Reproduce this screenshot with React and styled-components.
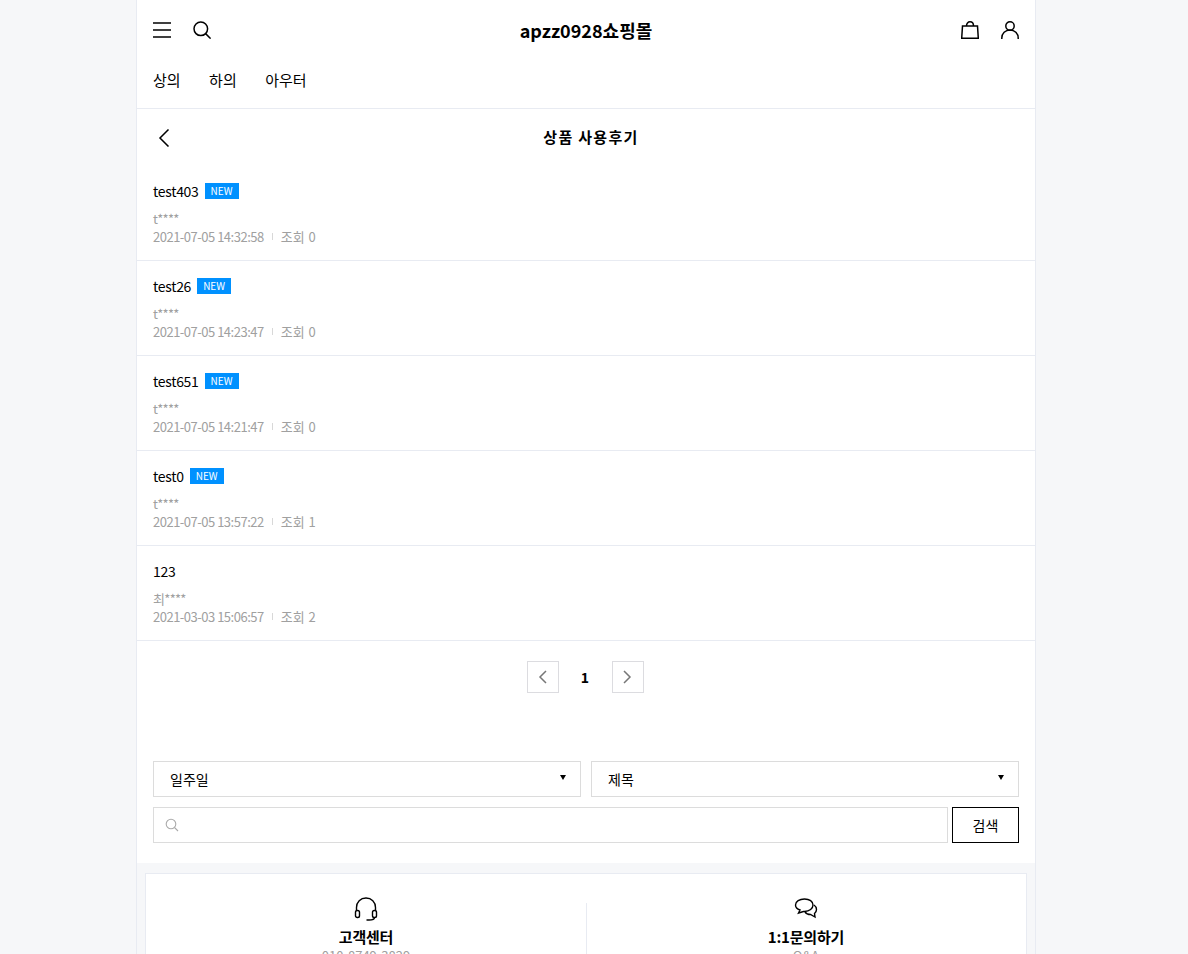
import React from "react";
import styled, { createGlobalStyle } from "styled-components";

const reviews = [
  { title: "test403", isNew: true, writer: "t****", date: "2021-07-05 14:32:58", views: 0 },
  { title: "test26", isNew: true, writer: "t****", date: "2021-07-05 14:23:47", views: 0 },
  { title: "test651", isNew: true, writer: "t****", date: "2021-07-05 14:21:47", views: 0 },
  { title: "test0", isNew: true, writer: "t****", date: "2021-07-05 13:57:22", views: 1 },
  { title: "123", isNew: false, writer: "최****", date: "2021-03-03 15:06:57", views: 2 },
];

const GlobalStyle = createGlobalStyle`
  html, body {
    margin: 0;
    padding: 0;
    height: 954px;
    overflow: hidden;
    background: #f6f7f9;
    font-family: "Noto Sans CJK KR", "Noto Sans", sans-serif;
    color: #000;
  }
  body { width: 1172px; }
  * { box-sizing: border-box; }
`;

const App = () => {
  return (
    <>
      <GlobalStyle />
      <Page>
        <TopBar>
          <IconGroup>
            <IconButton aria-label="메뉴">
              <svg width="18" height="18" viewBox="0 0 18 18" fill="none" stroke="#000" strokeWidth="1.5">
                <path d="M0 2h18M0 9h18M0 16h18" />
              </svg>
            </IconButton>
            <IconButton aria-label="검색">
              <svg width="18" height="18" viewBox="0 0 18 18" fill="none" stroke="#000" strokeWidth="1.5">
                <circle cx="7.8" cy="7.8" r="6.8" />
                <path d="M12.6 12.6L17.6 17.6" />
              </svg>
            </IconButton>
          </IconGroup>
          <Logo>apzz0928쇼핑몰</Logo>
          <IconGroup>
            <IconButton aria-label="장바구니">
              <svg width="18" height="18" viewBox="0 0 18 18" fill="none" stroke="#000" strokeWidth="1.5">
                <path d="M1.5 5h15l.8 12.300H.7z" />
                <path d="M5.500 5C5.500 2.300 7 .8 9 .8s3.500 1.500 3.500 4.200" />
              </svg>
            </IconButton>
            <IconButton aria-label="마이페이지">
              <svg width="18" height="18" viewBox="0 0 18 18" fill="none" stroke="#000" strokeWidth="1.5">
                <circle cx="9" cy="5" r="4.200" />
                <path d="M.8 18v-1c0-4.500 3.500-8 8.200-8s8.200 3.500 8.200 8v1" />
              </svg>
            </IconButton>
          </IconGroup>
        </TopBar>

        <Nav>
          <NavItem>상의</NavItem>
          <NavItem>하의</NavItem>
          <NavItem>아우터</NavItem>
        </Nav>

        <TitleBar>
          <BackButton aria-label="뒤로">
            <svg width="12" height="18" viewBox="0 0 12 18" fill="none" stroke="#000" strokeWidth="1.5">
              <path d="M10.500 .5L2 9l8.500 8.500" />
            </svg>
          </BackButton>
          <PageTitle>상품 사용후기</PageTitle>
        </TitleBar>

        <ReviewList>
          {reviews.map((review) => (
            <ReviewItem key={review.date}>
              <ReviewTitle>
                <span>{review.title}</span>
                {review.isNew && <NewBadge>NEW</NewBadge>}
              </ReviewTitle>
              <Writer>{review.writer}</Writer>
              <Meta>
                <MetaDate>{review.date}</MetaDate>
                <MetaDivider />
                <MetaViews>조회 {review.views}</MetaViews>
              </Meta>
            </ReviewItem>
          ))}
        </ReviewList>

        <Pagination>
          <PageArrow aria-label="이전">
            <svg width="9" height="14" viewBox="0 0 9 14" fill="none" stroke="#777" strokeWidth="1.5">
              <path d="M8 1L2 7l6 6" />
            </svg>
          </PageArrow>
          <PageNumber>1</PageNumber>
          <PageArrow aria-label="다음">
            <svg width="9" height="14" viewBox="0 0 9 14" fill="none" stroke="#777" strokeWidth="1.5">
              <path d="M1 1l6 6-6 6" />
            </svg>
          </PageArrow>
        </Pagination>

        <SearchForm>
          <SelectRow>
            <SelectBox>일주일<Caret /></SelectBox>
            <SelectBox>제목<Caret /></SelectBox>
          </SelectRow>
          <SearchRow>
            <SearchInput>
              <svg width="14" height="14" viewBox="0 0 14 14" fill="none" stroke="#aaa" strokeWidth="1.1">
                <circle cx="6" cy="6" r="4.800" />
                <path d="M9.500 9.500L13 13" />
              </svg>
            </SearchInput>
            <SearchButton>검색</SearchButton>
          </SearchRow>
        </SearchForm>

        <FooterArea>
          <ContactCard>
            <ContactColumn>
              <svg width="24" height="24" viewBox="0 0 24 24" fill="none" stroke="#000" strokeWidth="1.4">
                <path d="M2.500 14v-3.500C2.500 5 6.500 1 12 1s9.500 4 9.500 9.500V14" />
                <rect x="1.500" y="13.500" width="4" height="7" rx="1.800" />
                <rect x="18.500" y="13.500" width="4" height="7" rx="1.800" />
                <path d="M20.500 20.500c0 1.500-2.500 2.500-5.500 2.500h-2.500" />
              </svg>
              <ContactTitle>고객센터</ContactTitle>
              <ContactText>010-8749-3829</ContactText>
            </ContactColumn>
            <ContactColumn>
              <svg width="24" height="24" viewBox="0 0 24 24" fill="none" stroke="#000" strokeWidth="1.4">
                <path d="M10.500 2c5 0 8.500 2.500 8.500 6s-3.500 6.500-8.500 6.500l-1 0-5 1.500 1.500-3C3 12 1.500 10.500 1.500 8c0-3.500 4-6 9-6z" />
                <path d="M20 8c1.500 1 2.500 2.500 2.500 4.500 0 1.500-.8 3-2 4l.5 3.500-4.500-2.500c-2.500 0-4.500-1-5.500-2.500" />
              </svg>
              <ContactTitle>1:1문의하기</ContactTitle>
              <ContactText>Q&amp;A</ContactText>
            </ContactColumn>
          </ContactCard>
        </FooterArea>
      </Page>
    </>
  );
};

const Page = styled.div`
  width: 900px;
  margin: 0 auto;
  background: #fff;
  border-left: 1px solid #e8ebf2;
  border-right: 1px solid #e8ebf2;
`;
const TopBar = styled.header`
  height: 60px;
  padding: 0 16px;
  display: flex;
  align-items: center;
  justify-content: space-between;
`;
const IconGroup = styled.div`
  display: flex;
  align-items: center;
  gap: 22px;
`;
const IconButton = styled.button`
  width: 18px;
  height: 18px;
  padding: 0;
  border: 0;
  background: none;
  display: flex;
`;
const Logo = styled.h1`
  margin: 0;
  font-size: 18px;
  font-weight: 700;
  line-height: 60px;
`;
const Nav = styled.nav`
  height: 49px;
  padding: 0 16px 10px;
  display: flex;
  align-items: center;
  gap: 28.5px;
  border-bottom: 1px solid #e8ebf2;
`;
const NavItem = styled.a`
  font-size: 15px;
`;
const TitleBar = styled.div`
  height: 57px;
  padding: 0 0 3px 10px;
  display: flex;
  align-items: center;
  justify-content: center;
  position: relative;
`;
const BackButton = styled.button`
  position: absolute;
  left: 21px;
  top: 20px;
  padding: 0;
  border: 0;
  background: none;
  display: flex;
`;
const PageTitle = styled.h2`
  margin: 0;
  font-size: 15px;
  font-weight: 700;
  letter-spacing: 1.3px;
`;
const ReviewList = styled.ul`
  margin: 0;
  padding: 0;
  list-style: none;
`;
const ReviewItem = styled.li`
  height: 95px;
  padding: 14px 16px 0;
  border-bottom: 1px solid #e8ebf2;
`;
const ReviewTitle = styled.div`
  display: flex;
  align-items: center;
  gap: 6px;
  height: 22px;
  font-size: 14px;
  letter-spacing: -0.3px;
`;
const NewBadge = styled.span`
  width: 34px;
  height: 16px;
  background: #0091ff;
  color: #fff;
  font-size: 10px;
  letter-spacing: 0;
  line-height: 16px;
  text-align: center;
`;
const Writer = styled.div`
  margin-top: 8px;
  height: 17px;
  font-size: 13px;
  letter-spacing: -0.7px;
  line-height: 18px;
  color: #a0a0a0;
`;
const Meta = styled.div`
  display: flex;
  align-items: center;
  gap: 8px;
  height: 18px;
  font-size: 13px;
  color: #a0a0a0;
`;
const MetaDate = styled.span`
  letter-spacing: -0.5px;
`;
const MetaViews = styled.span`
  word-spacing: 1px;
`;
const MetaDivider = styled.i`
  width: 1px;
  height: 7px;
  background: #d8d8d8;
`;
const Pagination = styled.div`
  margin-top: 20px;
  padding-right: 2px;
  display: flex;
  justify-content: center;
  align-items: center;
`;
const PageArrow = styled.button`
  width: 32px;
  height: 32px;
  padding: 0;
  border: 1px solid #dcdce0;
  background: #fff;
  display: flex;
  align-items: center;
  justify-content: center;
`;
const PageNumber = styled.strong`
  width: 53px;
  text-align: center;
  font-size: 14px;
  font-weight: 700;
`;
const SearchForm = styled.div`
  margin-top: 68px;
  padding: 0 16px 20px;
  display: flex;
  flex-direction: column;
  gap: 10px;
`;
const SelectRow = styled.div`
  display: flex;
  gap: 10px;
`;
const SelectBox = styled.div`
  flex: 1;
  height: 36px;
  padding: 0 16px;
  border: 1px solid #dcdcdc;
  font-size: 14px;
  line-height: 34px;
  position: relative;
`;
const Caret = styled.i`
  position: absolute;
  right: 14px;
  top: 13px;
  border-left: 3px solid transparent;
  border-right: 3px solid transparent;
  border-top: 5px solid #000;
`;
const SearchRow = styled.div`
  display: flex;
  gap: 4px;
`;
const SearchInput = styled.div`
  flex: 1;
  height: 36px;
  padding: 0 11px;
  border: 1px solid #dcdcdc;
  display: flex;
  align-items: center;
`;
const SearchButton = styled.button`
  width: 67px;
  height: 36px;
  padding: 0;
  border: 1px solid #000;
  background: #fff;
  font: inherit;
  font-size: 14px;
  color: #000;
`;
const FooterArea = styled.div`
  padding: 10px 8px;
  background: #f6f7f9;
`;
const ContactCard = styled.div`
  height: 140px;
  padding-top: 23px;
  display: grid;
  grid-template-columns: 1fr 1fr;
  background: #fff;
  border: 1px solid #e8ebf2;
`;
const ContactColumn = styled.div`
  position: relative;
  display: flex;
  flex-direction: column;
  align-items: center;
  height: 100px;
  & + &::before {
    content: "";
    position: absolute;
    left: 0;
    top: 6px;
    width: 1px;
    height: 94px;
    background: #e8ebf2;
  }
`;
const ContactTitle = styled.strong`
  margin-top: 5px;
  font-size: 15px;
  font-weight: 700;
  line-height: 22px;
  letter-spacing: -0.2px;
`;
const ContactText = styled.span`
  margin-top: -2px;
  font-size: 13px;
  line-height: 19px;
  color: #a0a0a0;
`;

export default App;
